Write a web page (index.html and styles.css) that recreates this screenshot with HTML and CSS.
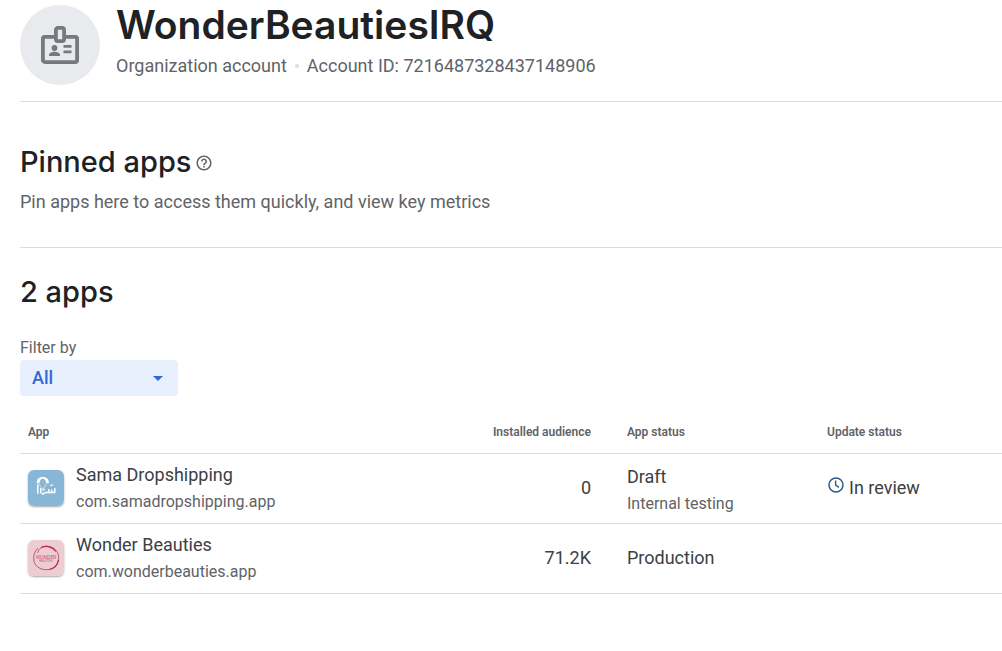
FILE: index.html
```html
<!DOCTYPE html>
<html lang="en">
<head>
<meta charset="utf-8">
<meta name="viewport" content="width=device-width, initial-scale=1">
<title>WonderBeautiesIRQ – All apps</title>
<link rel="stylesheet" href="styles.css">
</head>
<body>
<main class="page">
  <header class="account">
    <div class="avatar">
      <svg class="badge-icon" viewBox="0 0 40 40" aria-hidden="true">
        <rect x="2.9" y="11.9" width="34.2" height="25.2" rx="2" fill="none" stroke="#76797d" stroke-width="3.8"/>
        <rect x="15.9" y="2.9" width="8.2" height="13.2" rx="2" fill="#e8eaed" stroke="#76797d" stroke-width="3.8"/>
        <circle cx="14.5" cy="23" r="2.9" fill="#76797d"/>
        <path d="M9 31v-1.200c0-2 3.300-3 5.500-3s5.500 1 5.500 3V31z" fill="#76797d"/>
        <path d="M23.500 20h8v2.800h-8zM23.500 25.500h8v2.700h-8z" fill="#76797d"/>
      </svg>
    </div>
    <div class="account-text">
      <h1 class="account-name">WonderBeautiesIRQ</h1>
      <p class="account-meta"><span>Organization account</span><span class="dot"></span><span>Account ID: 7216487328437148906</span></p>
    </div>
  </header>

  <section class="pinned">
    <div class="heading-row">
      <h2 class="heading">Pinned apps</h2>
      <button class="help" type="button" aria-label="Help">
        <svg class="help-icon" viewBox="0 0 24 24" aria-hidden="true"><path fill="currentColor" d="M11 18h2v-2h-2v2zm1-16C6.480 2 2 6.480 2 12s4.480 10 10 10 10-4.480 10-10S17.520 2 12 2zm0 18c-4.410 0-8-3.590-8-8s3.590-8 8-8 8 3.590 8 8-3.590 8-8 8zm0-14c-2.210 0-4 1.790-4 4h2c0-1.100.9-2 2-2s2 .9 2 2c0 2-3 1.750-3 5h2c0-2.250 3-2.500 3-5 0-2.210-1.790-4-4-4z"/></svg>
      </button>
    </div>
    <p class="lead">Pin apps here to access them quickly, and view key metrics</p>
  </section>

  <section class="apps">
    <h2 class="heading">2 apps</h2>
    <div class="filter">
      <label class="filter-label" for="filter">Filter by</label>
      <div class="select-box">
        <select class="select" id="filter"><option>All</option></select>
        <svg class="arrow" viewBox="0 0 10 5" aria-hidden="true"><path d="M0 0h10L5 5z" fill="#3367d6"/></svg>
      </div>
    </div>

    <table class="table">
      <colgroup><col><col class="col-audience"><col class="col-status"><col class="col-update"></colgroup>
      <thead>
        <tr><th scope="col">App</th><th scope="col" class="num">Installed audience</th><th scope="col">App status</th><th scope="col">Update status</th></tr>
      </thead>
      <tbody>
        <tr>
          <td>
            <div class="app">
              <svg class="app-icon" viewBox="0 0 36 36" aria-hidden="true">
                <rect width="36" height="36" fill="#88b6d6"/>
                <path d="M8.800 13.500C8.300 9.300 11 7 14.800 7s6.500 2.300 6 6.500l-2.800-.8c0-1.800-1.200-3.700-3.200-4.200-2 .5-3.200 2.400-3.200 4.200z" fill="#fff"/>
                <path d="M10.500 13l3 5M19.200 13l-3.200 5" stroke="#fff" stroke-width=".6" opacity=".8"/>
                <path d="M9.800 14.500v9.300" stroke="#fff" stroke-width="1.500"/>
                <path d="M12.700 18v4.500l2.500 1.700 2.300-1.700h9.300v-4.500M20.800 22.500v-3.500M23.800 22.500v-3" fill="none" stroke="#fff" stroke-width="1.400"/>
                <path d="M22 15.700l3.300-1" stroke="#fff" stroke-width="1.100"/>
                <path d="M15.300 17.500l2.200 2-2.200 2-2-2z" fill="#fff" opacity=".6"/>
              </svg>
              <div class="lines"><span class="primary">Sama Dropshipping</span><span class="secondary">com.samadropshipping.app</span></div>
            </div>
          </td>
          <td class="num">0</td>
          <td><div class="lines lines-status"><span class="primary">Draft</span><span class="secondary">Internal testing</span></div></td>
          <td>
            <div class="update">
              <svg class="clock" viewBox="0 0 16 16" aria-hidden="true"><circle cx="8" cy="8" r="7" fill="none" stroke="#2b5a8c" stroke-width="1.500"/><path d="M7.600 3.600v4.600l3.400 2.200" fill="none" stroke="#2b5a8c" stroke-width="1.400"/></svg>
              <span>In review</span>
            </div>
          </td>
        </tr>
        <tr>
          <td>
            <div class="app">
              <svg class="app-icon" viewBox="0 0 36 36" aria-hidden="true">
                <rect width="36" height="36" fill="#eccdd2"/>
                <path d="M9.500 13C11 8 15 6 19 6.200c7 .3 12 5.500 11.700 12C30.400 25 25 29.500 19 29.700 12 30 6.500 26 5.800 20c-.5-5 .9-9 4.200-12" fill="none" stroke="#c9426b" stroke-width=".9"/>
                <path d="M13 7.800c5-2.800 12-1 15 3.700M30.500 20c-.8 5-4.500 8.500-9 9.500" fill="none" stroke="#bd2857" stroke-width="1.200"/>
                <text class="logo-word" x="18" y="19" text-anchor="middle">WONDER</text>
                <text class="logo-sub" x="18" y="22" text-anchor="middle">BEAUTIES</text>
              </svg>
              <div class="lines"><span class="primary">Wonder Beauties</span><span class="secondary">com.wonderbeauties.app</span></div>
            </div>
          </td>
          <td class="num">71.2K</td>
          <td>Production</td>
          <td></td>
        </tr>
      </tbody>
    </table>
  </section>
</main>
</body>
</html>
```
FILE: styles.css
```css
* { box-sizing: border-box; }

body {
  margin: 0;
  background: #fff;
  color: #3c4043;
  font: 400 18px/24px Roboto, "Liberation Sans", sans-serif;
}

h1, h2, p { margin: 0; }

.page { padding-left: 20px; }

.account {
  display: flex;
  gap: 16px;
  padding: 5px 0 16px;
  border-bottom: 1px solid #dadce0;
}

.avatar {
  display: grid;
  place-items: center;
  flex: none;
  width: 80px;
  height: 80px;
  border-radius: 50%;
  background: #e8eaed;
}

.badge-icon { width: 40px; height: 40px; }

.account-name {
  color: #202124;
  font: 600 39px/40px Inter, Roboto, sans-serif;
}

.account-meta {
  display: flex;
  align-items: center;
  gap: 8px;
  padding-top: 9px;
  color: #5f6368;
}

.dot {
  width: 4px;
  height: 4px;
  border-radius: 50%;
  background: #dadce0;
}

.pinned {
  padding: 40px 0 33px;
  border-bottom: 1px solid #dadce0;
}

.heading-row {
  display: flex;
  align-items: center;
  gap: 4px;
}

.heading {
  color: #202124;
  font: 500 29px/40px Inter, Roboto, sans-serif;
}

.help {
  display: grid;
  padding: 2px 0 0;
  border: 0;
  background: none;
  color: #5f6368;
}

.help-icon { width: 18px; height: 18px; }

.lead {
  padding-top: 8px;
  color: #5f6368;
}

.apps { padding-top: 24px; }

.filter { padding-top: 24px; }

.filter-label {
  display: block;
  padding-top: 2px;
  color: #5f6368;
  font-size: 16px;
  line-height: 20px;
}

.select-box {
  display: grid;
  align-items: center;
  width: 158px;
  margin-top: 2px;
}

.select, .arrow { grid-area: 1 / 1; }

.select {
  appearance: none;
  width: 100%;
  height: 36px;
  padding: 0 12px;
  border: 0;
  border-radius: 4px;
  background: #e8f0fe;
  color: #3367d6;
  font: 500 18px/24px Roboto, sans-serif;
}

.arrow {
  justify-self: end;
  width: 10px;
  height: 5px;
  margin-right: 15px;
  pointer-events: none;
}

.table {
  width: 100%;
  margin-top: 16px;
  border-collapse: separate;
  border-spacing: 0;
  table-layout: fixed;
}

.col-audience { width: 180px; }
.col-status { width: 200px; }
.col-update { width: 183px; }

th, td {
  padding: 0 8px 2px;
  border-bottom: 1px solid #dadce0;
  text-align: left;
}

th {
  height: 42px;
  color: #5f6368;
  font-size: 12px;
  font-weight: 600;
  line-height: 16px;
}

td { height: 70px; }

.num {
  padding-right: 28px;
  text-align: right;
}

.app {
  display: flex;
  align-items: center;
  gap: 12px;
}

.app-icon {
  flex: none;
  width: 36px;
  height: 36px;
  border-radius: 6px;
  box-shadow: 0 1px 2px rgba(60, 64, 67, 0.45);
}

.logo-word { fill: #c9557b; font: 400 5px Roboto, sans-serif; }
.logo-sub { fill: #c9557b; font: 400 3px Roboto, sans-serif; }

.lines {
  display: flex;
  flex-direction: column;
  gap: 4px;
}

.lines-status { padding-top: 4px; }

.secondary {
  color: #5f6368;
  font-size: 16px;
  line-height: 22px;
}

.update {
  display: flex;
  align-items: center;
  gap: 4px;
}

.clock {
  width: 18px;
  height: 18px;
  padding: 1px;
  margin-bottom: 6px;
}
```
